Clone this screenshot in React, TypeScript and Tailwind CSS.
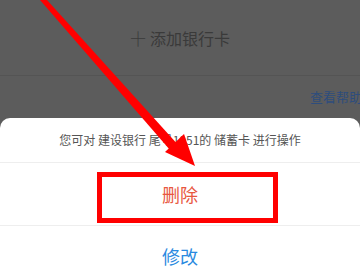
import React from 'react'

const Arrow = () => (
  <svg
    className="absolute left-0 top-0 pointer-events-none"
    width={360}
    height={270}
    viewBox="0 0 360 270"
  >
    {/* tapered shaft */}
    <polygon points="40,0 47,0 180,147 170,150" fill="#ff0000" />
    {/* head */}
    <polygon points="195,166 184,134 165,152" fill="#ff0000" />
  </svg>
)

const App = () => {
  return (
    <div
      className="relative w-[360px] h-[270px] overflow-hidden bg-[#5c5c5c]"
      style={{ fontFamily: '"Noto Sans CJK SC", "Noto Sans", sans-serif' }}
    >
      <div className="h-[76px] border-b border-[#545454] flex items-center justify-center text-[16px] text-[#3a3a3a]">
        <span className="mr-1 font-light">十</span>
        <span>添加银行卡</span>
      </div>
      <div className="h-[42px] flex items-center pl-[310px] whitespace-nowrap text-[13px] text-[#2e4d7c]">
        查看帮助
      </div>

      <div className="bg-white rounded-t-[10px]">
        <div className="h-[45px] flex items-center justify-center border-b border-[#eeeeee] text-[12px] text-[#555555] whitespace-nowrap">
          您可对 建设银行 尾号1051的 储蓄卡 进行操作
        </div>
        <div className="h-[63px] flex items-center justify-center border-b border-[#eeeeee] text-[18px] text-[#e8573f]">
          删除
        </div>
        <div className="h-[60px] flex items-center justify-center text-[18px] text-[#2a8ae0]">
          修改
        </div>
      </div>

      <div className="absolute left-[97px] top-[172px] w-[181px] h-[51px] border-[5px] border-[#ff0000]" />
      <Arrow />
    </div>
  )
}

export default App
